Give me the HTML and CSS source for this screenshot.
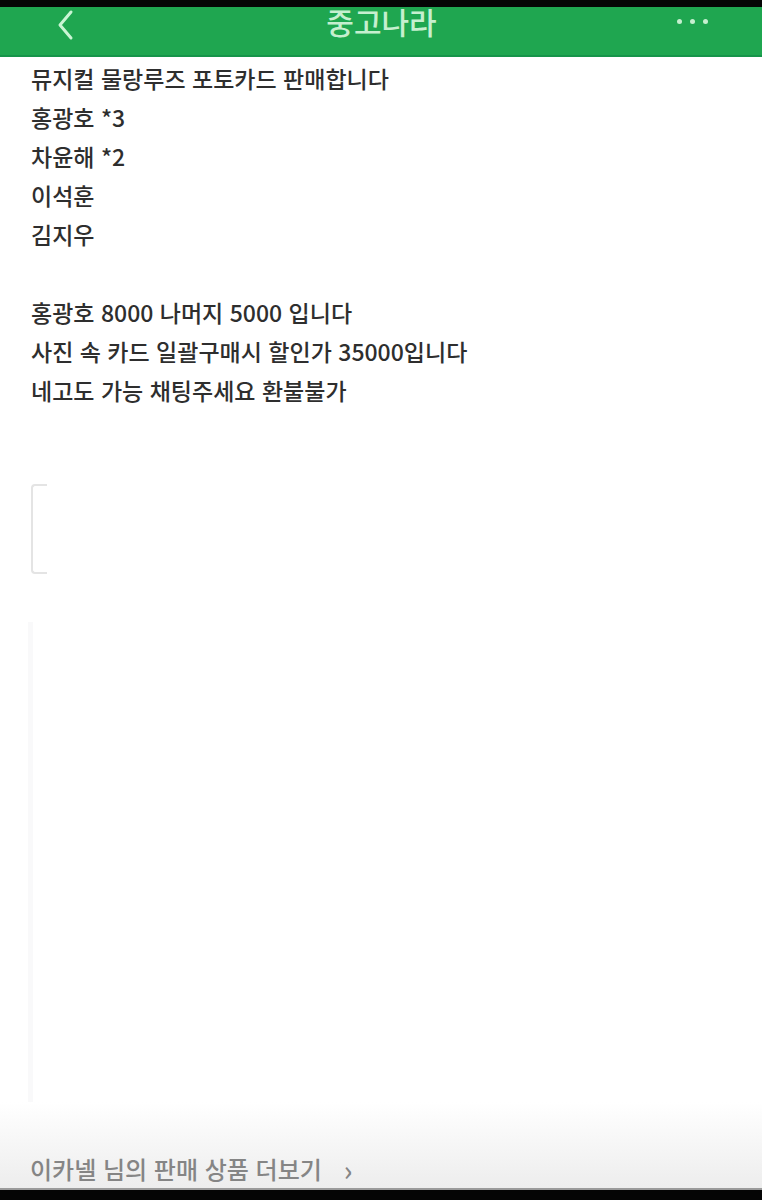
FILE: index.html
```html
<!DOCTYPE html>
<html lang="ko">
<head>
  <meta charset="UTF-8" />
  <title>중고나라</title>
  <link rel="stylesheet" href="styles.css">
</head>
<body>
  <div class="topEdge"></div>

  <header class="appBar">
    <svg class="backIcon" width="20" height="32" viewBox="0 0 20 32">
      <path d="M15 3 L4 16 L15 29" fill="none" stroke="#c9f5d4" stroke-width="3" stroke-linecap="round" stroke-linejoin="round" />
    </svg>
    <div class="appTitle">중고나라</div>
    <div class="moreDots"><span></span><span></span><span></span></div>
  </header>

  <main class="post">
    <div class="postText">
      <p>뮤지컬 물랑루즈 포토카드 판매합니다</p>
      <p>홍광호 *3</p>
      <p>차윤해 *2</p>
      <p>이석훈</p>
      <p>김지우</p>
      <p>&nbsp;</p>
      <p>홍광호 8000 나머지 5000 입니다</p>
      <p>사진 속 카드 일괄구매시 할인가 35000입니다</p>
      <p>네고도 가능 채팅주세요 환불불가</p>
    </div>

    <!-- image box, cut off -->
    <div class="photoEdge"></div>
    <div class="faintLine"></div>
  </main>

  <footer class="moreBar">
    <span>이카넬 님의 판매 상품 더보기</span>
    <span class="arrow">&rsaquo;</span>
  </footer>

  <div class="bottomEdge"></div>
</body>
</html>
```

FILE: styles.css
```css
html, body {
  margin: 0;
  padding: 0;
}

body {
  width: 762px;
  height: 1200px;
  display: flex;
  flex-direction: column;
  background: #fff;
  font-family: 'Noto Sans CJK KR', 'Noto Sans', sans-serif;
  overflow: hidden;
}

.topEdge {
  height: 7px;
  background: #050505;
}

.appBar {
  height: 51px;
  background: #1fa650;
  display: flex;
  align-items: flex-start;
  justify-content: space-between;
  padding: 0 54px 0 56px;
  box-sizing: border-box;
  border-bottom: 2px solid #16944a;
}

.backIcon {
  margin-top: 2px;
}

.appTitle {
  color: #c6efcf;
  font-size: 30px;
  font-weight: 500;
  line-height: 30px;
  margin-top: -1px;
  margin-left: 10px;
}

.moreDots {
  display: flex;
  gap: 8px;
  margin-top: 12px;
}

.moreDots span {
  width: 5px;
  height: 5px;
  border-radius: 50%;
  background: #c6efcf;
}

.post {
  flex: 1;
  padding: 2px 0 0 31px;
}

.postText p {
  margin: 0;
  font-size: 23px;
  font-weight: 500;
  line-height: 39px;
  color: #2e2e2e;
}

.photoEdge {
  width: 14px;
  height: 86px;
  margin-top: 74px;
  border: 2px solid #e4e4e4;
  border-right: none;
  border-radius: 4px 0 0 4px;
}

.faintLine {
  width: 5px;
  height: 480px;
  margin: 48px 0 0 -3px;
  background: #f9f9fa;
}

.moreBar {
  height: 90px;
  background: linear-gradient(#fff, #ededed);
  display: flex;
  align-items: flex-end;
  gap: 22px;
  padding: 0 0 3px 30px;
  box-sizing: border-box;
  color: #858585;
  font-size: 24px;
  font-weight: 500;
  line-height: 32px;
  border-bottom: 2px solid #9a9a9a;
}

.moreBar .arrow {
  font-size: 28px;
}

.bottomEdge {
  height: 10px;
  background: #050505;
}
```
